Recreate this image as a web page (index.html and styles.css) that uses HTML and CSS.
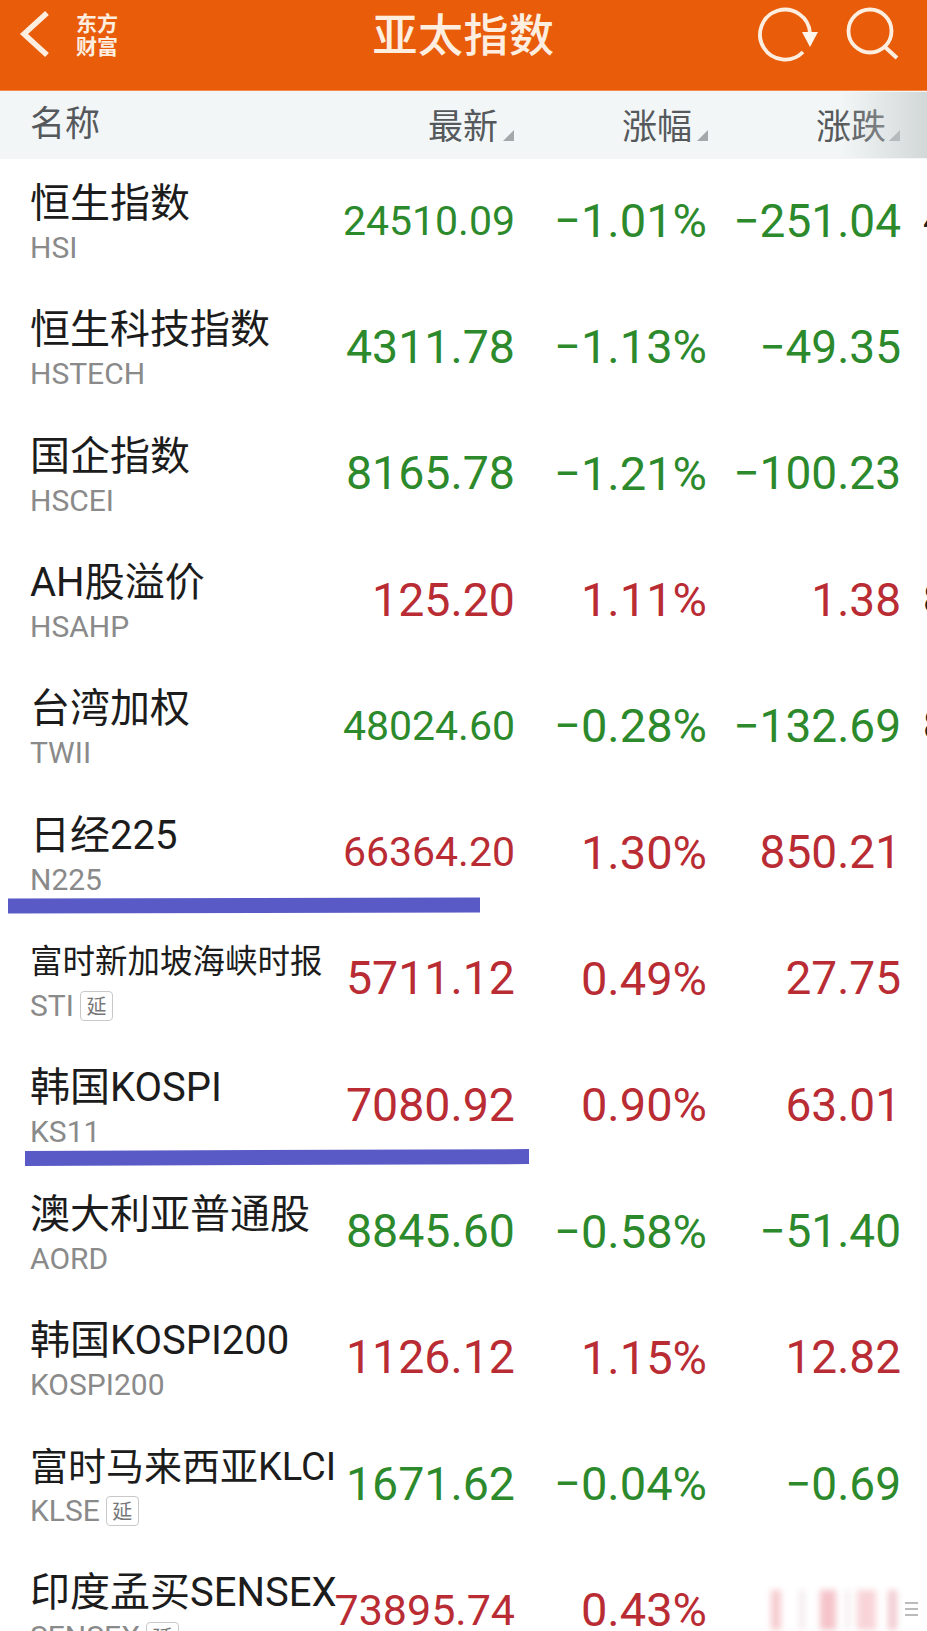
FILE: index.html
```html
<!DOCTYPE html>
<html lang="zh-CN">
<head>
<meta charset="utf-8">
<title>亚太指数</title>
<link rel="stylesheet" href="styles.css">
</head>
<body>
<div class="page">
  <header class="bar">
    <div class="bar-left">
      <svg class="back" viewBox="18 8 34 52" width="34" height="52"><path d="M47 13 L24 34 L47 55" fill="none" stroke="#fdeee0" stroke-width="5.5"/></svg>
      <div class="logo">东方<br>财富</div>
    </div>
    <h1 class="title">亚太指数</h1>
    <div class="bar-right">
      <svg class="ico" viewBox="756 6 62 56" width="62" height="56"><path d="M810 33 A25 25 0 1 0 803 52" fill="none" stroke="#fdeee0" stroke-width="3.8"/><path d="M802 32 L818 32 L810 47 Z" fill="#fff6ee"/></svg>
      <svg class="ico" viewBox="845 6 60 56" width="60" height="56"><circle cx="870" cy="31" r="21.5" fill="none" stroke="#fdeee0" stroke-width="3.8"/><path d="M885 47 L897 58" fill="none" stroke="#fdeee0" stroke-width="4"/></svg>
    </div>
  </header>
  <div class="heads">
    <span class="h-name">名称</span>
    <span class="h-col">最新<i class="tri"></i></span>
    <span class="h-col">涨幅<i class="tri"></i></span>
    <span class="h-col">涨跌<i class="tri"></i></span>
  </div>
  <div class="list">
    <div class="row dn"><div class="nm"><div class="cn">恒生指数</div><div class="code">HSI</div></div><div class="v last s">24510.09</div><div class="v pct">−1.01%</div><div class="v chg">−251.04</div><div class="x">4</div></div>
    <div class="row dn"><div class="nm"><div class="cn">恒生科技指数</div><div class="code">HSTECH</div></div><div class="v last">4311.78</div><div class="v pct">−1.13%</div><div class="v chg">−49.35</div></div>
    <div class="row dn"><div class="nm"><div class="cn">国企指数</div><div class="code">HSCEI</div></div><div class="v last">8165.78</div><div class="v pct">−1.21%</div><div class="v chg">−100.23</div></div>
    <div class="row up"><div class="nm"><div class="cn">AH股溢价</div><div class="code">HSAHP</div></div><div class="v last">125.20</div><div class="v pct">1.11%</div><div class="v chg">1.38</div><div class="x">8</div></div>
    <div class="row dn"><div class="nm"><div class="cn">台湾加权</div><div class="code">TWII</div></div><div class="v last s">48024.60</div><div class="v pct">−0.28%</div><div class="v chg">−132.69</div><div class="x">8</div></div>
    <div class="row up"><div class="nm"><div class="cn">日经225</div><div class="code">N225</div></div><div class="v last s">66364.20</div><div class="v pct">1.30%</div><div class="v chg">850.21</div></div>
    <div class="row up"><div class="nm"><div class="cn small">富时新加坡海峡时报</div><div class="code">STI<span class="tag">延</span></div></div><div class="v last">5711.12</div><div class="v pct">0.49%</div><div class="v chg">27.75</div></div>
    <div class="row up"><div class="nm"><div class="cn">韩国KOSPI</div><div class="code">KS11</div></div><div class="v last">7080.92</div><div class="v pct">0.90%</div><div class="v chg">63.01</div></div>
    <div class="row dn"><div class="nm"><div class="cn">澳大利亚普通股</div><div class="code">AORD</div></div><div class="v last">8845.60</div><div class="v pct">−0.58%</div><div class="v chg">−51.40</div></div>
    <div class="row up"><div class="nm"><div class="cn">韩国KOSPI200</div><div class="code">KOSPI200</div></div><div class="v last">1126.12</div><div class="v pct">1.15%</div><div class="v chg">12.82</div></div>
    <div class="row dn"><div class="nm"><div class="cn narrow">富时马来西亚KLCI</div><div class="code">KLSE<span class="tag">延</span></div></div><div class="v last">1671.62</div><div class="v pct">−0.04%</div><div class="v chg">−0.69</div></div>
    <div class="row up"><div class="nm"><div class="cn">印度孟买SENSEX</div><div class="code">SENSEX<span class="tag">延</span></div></div><div class="v last m">73895.74</div><div class="v pct">0.43%</div><div class="smear"></div></div>
  </div>
  <div class="mark m1"></div>
  <div class="mark m2"></div>
  <div class="shade"></div>
  <div class="wm"></div>
</div>
</body>
</html>
```
FILE: styles.css
```css
* { box-sizing: border-box; }
html, body { margin: 0; padding: 0; background: #fff; }
body { font-family: "Roboto", "Noto Sans CJK SC", sans-serif; }
.page { position: relative; width: 927px; height: 1631px; overflow: hidden; background: #fff; }

.bar { height: 91px; background: #e85c0a; display: grid; grid-template-columns: 1fr auto 1fr; align-items: start; padding: 6px 22px 0 18px; border-bottom: 1px solid #f58a4e; }
.bar-left { display: flex; align-items: center; gap: 24px; margin-top: 2px; }
.back { display: block; }
.logo { font-family: "Noto Sans CJK SC", sans-serif; color: #fdeee0; font-size: 21px; line-height: 23px; font-weight: 700; }
.title { margin: -2px 0 0 4px; color: #fdeee0; font-family: "Noto Sans CJK SC", sans-serif; font-size: 45px; font-weight: 500; line-height: 58px; letter-spacing: 0.5px; }
.bar-right { display: flex; justify-content: flex-end; gap: 27px; }
.ico { display: block; }

.heads { height: 68px; background: #f2f6f7; display: grid; grid-template-columns: minmax(0, 1fr) 190px 194px 192px; align-items: center; padding: 0 27px 4px 30px; font-family: "Noto Sans CJK SC", sans-serif; color: #55595c; font-size: 35px; }
.h-name { margin-top: -6px; }
.h-col { justify-self: end; display: flex; align-items: flex-end; }
.tri { display: block; width: 0; height: 0; border-left: 11px solid transparent; border-bottom: 11px solid #a3a8ab; margin: 0 0 8px 5px; }
.h-col:last-child .tri { margin-left: 3px; }

.row { height: 126.3px; display: grid; grid-template-columns: minmax(0, 1fr) 191px 192px 194px 26px; align-items: center; padding-left: 30px; }
.nm { width: 330px; white-space: nowrap; padding-top: 3px; }
.cn { font-size: 40px; line-height: 46px; color: #1c1c1c; }
.cn.small { font-size: 32.5px; }
.cn.narrow { font-size: 38px; }
.code { font-size: 30px; line-height: 36px; margin-top: 3px; color: #8a8a8a; display: flex; align-items: center; gap: 6px; }
.tag { font-family: "Noto Sans CJK SC", sans-serif; font-size: 20px; line-height: 27px; width: 33px; height: 30px; text-align: center; border: 1.5px solid #c8c8c8; border-radius: 4px; color: #777; }
.v { text-align: right; white-space: nowrap; margin-top: -3px; }
.last { font-size: 46.5px; }
.last.s { font-size: 41px; }
.last.m { font-size: 43px; }
.pct { font-size: 47px; }
.chg { font-size: 46px; }
.x { font-size: 40px; color: #222; margin-left: 22px; margin-top: -3px; }
.up .v { color: #b92c34; }
.dn .v { color: #2c8a2c; }

.smear { justify-self: end; width: 130px; height: 40px; margin-top: -2px; filter: blur(3px); background: linear-gradient(to right, #f6ccd0 0 10px, #fff 10px 29px, #efe3e6 29px 33px, #fff 33px 49px, #f4c4ca 49px 65px, #fff 65px 75px, #efe3e6 75px 78px, #fff 78px 86px, #f8d4d8 86px 105px, #fff 105px 117px, #f2ccd2 117px 126px, #fff 126px); }
.wm { position: absolute; left: 905px; top: 1602px; width: 13px; height: 18px; background: repeating-linear-gradient(to bottom, #bbb 0 2px, transparent 2px 6px); }

.mark { position: absolute; height: 15px; background: #5a5ac6; }
.m1 { left: 8px; top: 898px; width: 472px; transform: rotate(-0.1deg); }
.m2 { left: 25px; top: 1150px; width: 504px; transform: rotate(-0.2deg); }
.shade { position: absolute; right: 0; top: 92px; width: 87px; height: 66px; background: linear-gradient(to right, rgba(200,205,205,0), rgba(200,205,205,.75)); }
```
